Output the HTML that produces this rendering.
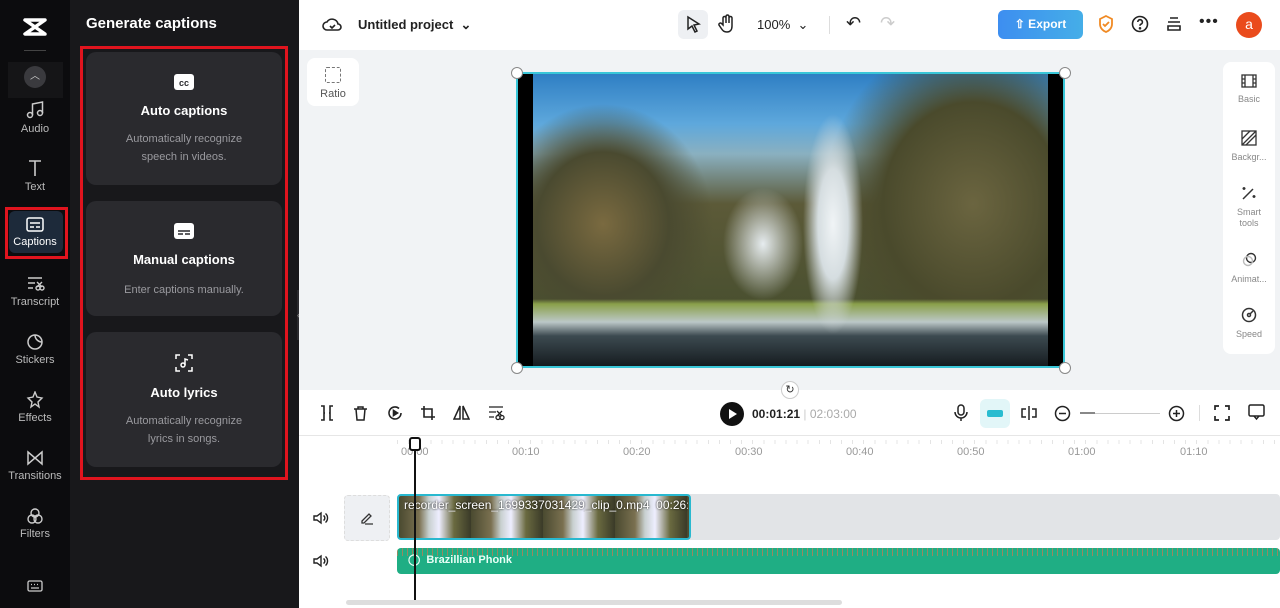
<!DOCTYPE html>
<html><head><meta charset="utf-8"><style>
*{box-sizing:border-box;margin:0;padding:0}
body{width:1280px;height:608px;overflow:hidden;font-family:"Liberation Sans",Arial,sans-serif;position:relative;background:#fff}
.a{position:absolute}
.sb{left:0;top:0;width:70px;height:608px;background:#0c0c0e}
.si{position:absolute;left:0;width:70px;text-align:center;color:#bbb;font-size:11px}
.si svg{display:block;margin:0 auto 3px}
.pn{left:70px;top:0;width:229px;height:608px;background:#18181b}
.card{position:absolute;left:86px;width:196px;background:#2a2a2e;border-radius:10px;text-align:center;color:#fff}
.card b{display:block;font-size:13px;margin-top:8px}
.card p{font-size:11px;color:#9a9a9f;line-height:18px;margin-top:12px}
.rt{position:absolute;left:0;width:52px;text-align:center;font-size:9px;color:#888;line-height:11px}
.rt svg{display:block;margin:0 auto 6px}
.tl{color:#999;font-size:11px;top:446px}
</style></head><body>
<div class="a sb"></div>
<svg class="a" style="left:22px;top:17px" width="26" height="20" viewBox="0 0 26 20"><path d="M3 3h20L3 17h20z" fill="none" stroke="#fff" stroke-width="3.5" stroke-linejoin="round"/></svg>
<div class="a" style="left:24px;top:50px;width:22px;height:1px;background:#444"></div>
<div class="a" style="left:8px;top:62px;width:55px;height:36px;background:#151517"></div>
<div class="a" style="left:24px;top:66px;width:22px;height:22px;border-radius:50%;background:#3a3a3e;color:#ccc;font-size:10px;text-align:center;line-height:22px">︿</div>
<div class="si" style="top:100px"><svg width="20" height="20" viewBox="0 0 20 20" fill="none" stroke="#ccc" stroke-width="1.5"><circle cx="5" cy="15" r="2.5"/><circle cx="15" cy="13" r="2.5"/><path d="M7.5 15V4l10-2v11"/></svg>Audio</div>
<div class="si" style="top:158px"><svg width="20" height="20" viewBox="0 0 20 20" fill="none" stroke="#ccc" stroke-width="1.6"><path d="M4 3h12M10 3v15"/></svg>Text</div>
<div class="a" style="left:9px;top:211px;width:54px;height:42px;background:#1d2a3a;border-radius:6px"></div>
<div class="a" style="left:5px;top:207px;width:63px;height:52px;border:3px solid #e0141e"></div>
<div class="si" style="top:217px;color:#fff"><svg width="18" height="16" viewBox="0 0 18 16" fill="none" stroke="#fff" stroke-width="1.5"><rect x="1" y="1" width="16" height="13" rx="2"/><path d="M4 6h10M4 10h4M10 10h4"/></svg>Captions</div>
<div class="si" style="top:275px"><svg width="20" height="18" viewBox="0 0 20 18" fill="none" stroke="#ccc" stroke-width="1.4"><path d="M3 3h14M3 8h7M3 13h5"/><circle cx="13" cy="13" r="2"/><circle cx="17" cy="13" r="2"/><path d="M12 7l5 5M17 7l-5 5"/></svg>Transcript</div>
<div class="si" style="top:333px"><svg width="18" height="18" viewBox="0 0 18 18" fill="none" stroke="#ccc" stroke-width="1.5"><circle cx="9" cy="9" r="7"/><path d="M9 2a7 7 0 0 0 7 7"/></svg>Stickers</div>
<div class="si" style="top:391px"><svg width="18" height="18" viewBox="0 0 18 18" fill="none" stroke="#ccc" stroke-width="1.4"><path d="M9 1l2 5 5 1-4 4 1 5-4-3-4 3 1-5-4-4 5-1z"/></svg>Effects</div>
<div class="si" style="top:449px"><svg width="18" height="18" viewBox="0 0 18 18" fill="none" stroke="#ccc" stroke-width="1.5"><path d="M2 3l7 6-7 6zM16 3l-7 6 7 6z"/></svg>Transitions</div>
<div class="si" style="top:507px"><svg width="18" height="18" viewBox="0 0 18 18" fill="none" stroke="#ccc" stroke-width="1.4"><circle cx="9" cy="6" r="4"/><circle cx="6" cy="12" r="4"/><circle cx="12" cy="12" r="4"/></svg>Filters</div>
<svg class="a" style="left:27px;top:580px" width="16" height="12" viewBox="0 0 16 12" fill="none" stroke="#ccc" stroke-width="1.3"><rect x="1" y="1" width="14" height="10" rx="1.5"/><path d="M4 8h8M4 4.5h1M7 4.5h1M10 4.5h1"/></svg>

<div class="a pn"></div>
<div class="a" style="left:86px;top:15px;color:#fff;font-weight:bold;font-size:15px">Generate captions</div>
<div class="a" style="left:80px;top:46px;width:208px;height:434px;border:3px solid #e0141e"></div>
<div class="card" style="top:52px;height:133px;padding-top:22px"><svg width="20" height="16" viewBox="0 0 20 16"><rect width="20" height="16" rx="3" fill="#fff"/><text x="10" y="12" font-size="9" font-weight="bold" text-anchor="middle" fill="#2a2a2e" font-family="Liberation Sans">cc</text></svg><b>Auto captions</b><p>Automatically recognize<br>speech in videos.</p></div>
<div class="card" style="top:201px;height:115px;padding-top:22px"><svg width="20" height="16" viewBox="0 0 20 16"><rect width="20" height="16" rx="3" fill="#fff"/><path d="M4 8h12M4 11h5M11 11h5" stroke="#2a2a2e" stroke-width="1.5"/></svg><b>Manual captions</b><p style="margin-top:14px">Enter captions manually.</p></div>
<div class="card" style="top:332px;height:135px;padding-top:22px"><svg width="18" height="18" viewBox="0 0 18 18" fill="none" stroke="#fff" stroke-width="1.5"><path d="M1 5V1h4M13 1h4v4M17 13v4h-4M5 17H1v-4"/><circle cx="8" cy="11" r="2"/><path d="M10 11V5l3 1"/></svg><b>Auto lyrics</b><p>Automatically recognize<br>lyrics in songs.</p></div>
<div class="a" style="left:297px;top:290px;width:9px;height:50px;background:#2a2a2e;border-radius:0 5px 5px 0;color:#999;font-size:9px;line-height:50px">‹</div>

<!-- top bar -->
<div class="a" style="left:299px;top:0;width:981px;height:50px;background:#fff"></div>
<svg class="a" style="left:322px;top:15px" width="20" height="18" viewBox="0 0 20 18" fill="none" stroke="#222" stroke-width="1.6"><path d="M5 15a4 4 0 0 1 0-8 6 6 0 0 1 11 2 3 3 0 0 1 0 6z"/><path d="M8 11l2 2 3-3"/></svg>
<div class="a" style="left:358px;top:17px;font-size:13px;font-weight:bold;color:#222">Untitled project &nbsp;⌄</div>
<div class="a" style="left:678px;top:10px;width:30px;height:29px;background:#eef0f3;border-radius:6px"></div>
<svg class="a" style="left:686px;top:15px" width="16" height="18" viewBox="0 0 16 18"><path d="M2 2l11 7-5 1 3 6-2 1-3-6-4 3z" fill="none" stroke="#222" stroke-width="1.5"/></svg>
<svg class="a" style="left:718px;top:14px" width="18" height="20" viewBox="0 0 18 20" fill="none" stroke="#222" stroke-width="1.5"><path d="M5 11V4a1.5 1.5 0 0 1 3 0v5V2.5a1.5 1.5 0 0 1 3 0V9V4a1.5 1.5 0 0 1 3 0v8c0 4-2 6-5 6s-4-1-6-4l-2-3a1.5 1.5 0 0 1 2.5-1.5z"/></svg>
<div class="a" style="left:757px;top:17px;font-size:13px;color:#222">100% &nbsp;⌄</div>
<div class="a" style="left:829px;top:16px;width:1px;height:18px;background:#ddd"></div>
<div class="a" style="left:846px;top:13px;font-size:18px;color:#222">↶</div>
<div class="a" style="left:880px;top:13px;font-size:18px;color:#ccc">↷</div>
<div class="a" style="left:998px;top:10px;width:85px;height:29px;border-radius:6px;background:linear-gradient(90deg,#3d8ef0,#45aee8);color:#fff;font-size:12px;font-weight:bold;line-height:29px;text-align:center">⇧ Export</div>
<svg class="a" style="left:1098px;top:15px" width="16" height="18" viewBox="0 0 16 18" fill="none" stroke="#f08a24" stroke-width="1.8"><path d="M8 1l6 3v5c0 4-3 7-6 8-3-1-6-4-6-8V4z"/><path d="M5 9l2 2 4-4"/></svg>
<svg class="a" style="left:1131px;top:15px" width="18" height="18" viewBox="0 0 18 18" fill="none" stroke="#222" stroke-width="1.6"><circle cx="9" cy="9" r="7.5"/><path d="M6.8 7a2.3 2.3 0 1 1 3 2.2c-.7.3-.8.8-.8 1.6"/><circle cx="9" cy="13.3" r=".5" fill="#222"/></svg>
<svg class="a" style="left:1166px;top:16px" width="16" height="16" viewBox="0 0 16 16" fill="none" stroke="#222" stroke-width="1.6"><path d="M4 2h8M2 6h12M2 10h12v4H2z"/></svg>
<div class="a" style="left:1199px;top:13px;font-size:16px;color:#222;letter-spacing:1px">•••</div>
<div class="a" style="left:1236px;top:12px;width:26px;height:26px;border-radius:50%;background:#ea4b1c;color:#fff;text-align:center;line-height:25px;font-size:14px">a</div>

<!-- canvas -->
<div class="a" style="left:299px;top:50px;width:981px;height:340px;background:#f1f3f5"></div>
<div class="a" style="left:307px;top:58px;width:52px;height:48px;background:#fff;border-radius:8px;text-align:center;font-size:11px;color:#555;padding-top:9px"><div style="width:16px;height:16px;border:1.5px dashed #777;margin:0 auto 5px;border-radius:2px"></div>Ratio</div>
<div class="a" style="left:516px;top:72px;width:549px;height:296px;border:2px solid #39c6d8;background:#000"></div>
<div class="a" style="left:533px;top:74px;width:515px;height:292px;background:
radial-gradient(ellipse 30px 110px at 300px 150px,#f0f4f6 0%,#d5dde0 50%,transparent 100%),
radial-gradient(ellipse 50px 70px at 230px 170px,#e6ecef 0%,transparent 80%),
linear-gradient(180deg,transparent 0,transparent 225px,#8aa04a 230px,#bcc8c8 248px,#3c4a50 262px,#161c20 292px),
radial-gradient(ellipse 150px 170px at 440px 130px,#6b6540 0%,#4a4a2c 60%,transparent 100%),
radial-gradient(ellipse 110px 120px at 70px 150px,#7a6a40 0%,#4a4a30 60%,transparent 100%),
linear-gradient(180deg,#2f7fc4 0,#5ea8dc 50px,#8ab0c0 80px,#5c5a38 130px,#4a5030 230px)"></div>
<div class="a" style="left:511px;top:67px;width:12px;height:12px;border-radius:50%;background:#fff;border:1px solid #888"></div>
<div class="a" style="left:1059px;top:67px;width:12px;height:12px;border-radius:50%;background:#fff;border:1px solid #888"></div>
<div class="a" style="left:511px;top:362px;width:12px;height:12px;border-radius:50%;background:#fff;border:1px solid #888"></div>
<div class="a" style="left:1059px;top:362px;width:12px;height:12px;border-radius:50%;background:#fff;border:1px solid #888"></div>
<div class="a" style="left:1223px;top:62px;width:52px;height:292px;background:#fff;border-radius:8px">
<div class="rt" style="top:12px"><svg width="16" height="14" viewBox="0 0 16 14" fill="none" stroke="#333" stroke-width="1.3"><rect x="1" y="1" width="14" height="12"/><path d="M4 1v12M12 1v12M1 5h3M1 9h3M12 5h3M12 9h3"/></svg>Basic</div>
<div class="rt" style="top:68px"><svg width="16" height="16" viewBox="0 0 16 16" fill="none" stroke="#333" stroke-width="1.3"><rect x="1" y="1" width="14" height="14"/><path d="M1 9l8-8M5 15L15 5M1 15L15 1"/></svg>Backgr...</div>
<div class="rt" style="top:123px"><svg width="16" height="16" viewBox="0 0 16 16" fill="none" stroke="#333" stroke-width="1.5"><path d="M2 14L12 4M3 2v3M1.5 3.5h3M13 10v3M11.5 11.5h3"/></svg>Smart<br>tools</div>
<div class="rt" style="top:190px"><svg width="16" height="16" viewBox="0 0 16 16" fill="none" stroke="#333" stroke-width="1.4"><circle cx="10" cy="6" r="4.5"/><circle cx="7" cy="9" r="4.5" stroke="#bbb"/></svg>Animat...</div>
<div class="rt" style="top:245px"><svg width="16" height="16" viewBox="0 0 16 16" fill="none" stroke="#333" stroke-width="1.5"><circle cx="8" cy="8" r="6.5"/><circle cx="8" cy="8" r="1.5"/><path d="M9 7l3-3"/></svg>Speed</div>
</div>
<div class="a" style="left:781px;top:381px;width:18px;height:18px;border-radius:50%;background:#fff;border:1px solid #ccc;font-size:11px;text-align:center;line-height:16px;color:#333">↻</div>

<!-- timeline toolbar -->
<div class="a" style="left:299px;top:435px;width:981px;height:1px;background:#e6e6e6"></div>
<svg class="a" style="left:319px;top:405px" width="16" height="16" viewBox="0 0 16 16" fill="none" stroke="#222" stroke-width="1.6"><path d="M2 1h3v14H2M14 1h-3v14h3M5 8h1M10 8h1"/></svg>
<svg class="a" style="left:353px;top:405px" width="15" height="16" viewBox="0 0 15 16" fill="none" stroke="#222" stroke-width="1.5"><path d="M1 4h13M5 4V2h5v2M3 4l1 11h7l1-11"/></svg>
<svg class="a" style="left:387px;top:405px" width="16" height="16" viewBox="0 0 16 16" fill="none" stroke="#222" stroke-width="1.6"><path d="M14 8a6 6 0 1 1-2-4.5"/><path d="M6.5 5.5v5l4-2.5z" fill="#222"/></svg>
<svg class="a" style="left:420px;top:405px" width="16" height="16" viewBox="0 0 16 16" fill="none" stroke="#222" stroke-width="1.6"><path d="M4 1v11h11M1 4h11v11"/></svg>
<svg class="a" style="left:453px;top:405px" width="17" height="15" viewBox="0 0 17 15" fill="none" stroke="#222" stroke-width="1.5"><path d="M7 1L1 14h6zM10 1l6 13h-6z"/></svg>
<svg class="a" style="left:487px;top:405px" width="18" height="16" viewBox="0 0 18 16" fill="none" stroke="#222" stroke-width="1.3"><path d="M2 2h14M2 7h7M2 12h5"/><circle cx="11" cy="12.5" r="2"/><circle cx="15" cy="12.5" r="2"/><path d="M10 6l5 5M15 6l-5 5"/></svg>
<div class="a" style="left:720px;top:402px;width:24px;height:24px;border-radius:50%;background:#111"></div>
<div class="a" style="left:729px;top:409px;width:0;height:0;border-left:8px solid #fff;border-top:5px solid transparent;border-bottom:5px solid transparent"></div>
<div class="a" style="left:752px;top:407px;font-size:12px;font-weight:bold;color:#222">00:01:21 <span style="color:#ccc;font-weight:normal">|</span> <span style="color:#aaa;font-weight:normal">02:03:00</span></div>
<svg class="a" style="left:954px;top:404px" width="14" height="18" viewBox="0 0 14 18" fill="none" stroke="#222" stroke-width="1.5"><rect x="4" y="1" width="6" height="10" rx="3"/><path d="M1 8a6 6 0 0 0 12 0M7 14v3"/></svg>
<div class="a" style="left:980px;top:399px;width:30px;height:29px;background:#e2f6f8;border-radius:6px"></div>
<div class="a" style="left:987px;top:410px;width:16px;height:7px;background:#29bcd0;border-radius:2px"></div>
<svg class="a" style="left:1020px;top:405px" width="18" height="16" viewBox="0 0 18 16" fill="none" stroke="#222" stroke-width="1.5"><path d="M9 1v14M6 4H2v8h4M12 4h4v8h-4"/></svg>
<svg class="a" style="left:1054px;top:405px" width="17" height="17" viewBox="0 0 17 17" fill="none" stroke="#222" stroke-width="1.5"><circle cx="8.5" cy="8.5" r="7"/><path d="M5 8.5h7"/></svg>
<div class="a" style="left:1080px;top:413px;width:80px;height:1px;background:#ccc"></div>
<div class="a" style="left:1080px;top:412px;width:15px;height:2px;background:#888"></div>
<svg class="a" style="left:1168px;top:405px" width="17" height="17" viewBox="0 0 17 17" fill="none" stroke="#222" stroke-width="1.5"><circle cx="8.5" cy="8.5" r="7"/><path d="M5 8.5h7M8.5 5v7"/></svg>
<div class="a" style="left:1199px;top:405px;width:1px;height:16px;background:#ddd"></div>
<svg class="a" style="left:1214px;top:405px" width="16" height="16" viewBox="0 0 16 16" fill="none" stroke="#222" stroke-width="1.7"><path d="M1 5V1h4M11 1h4v4M15 11v4h-4M5 15H1v-4"/></svg>
<svg class="a" style="left:1248px;top:404px" width="17" height="17" viewBox="0 0 17 17" fill="none" stroke="#222" stroke-width="1.5"><rect x="1" y="1" width="15" height="11" rx="1.5"/><path d="M6 12l2.5 3 2.5-3"/></svg>

<!-- ruler -->
<div class="a" style="left:397px;top:440px;width:883px;height:4px;background:repeating-linear-gradient(90deg,#e4e4e4 0,#e4e4e4 1px,transparent 1px,transparent 11.1px)"></div>
<div class="a tl" style="left:401px">00:00</div>
<div class="a tl" style="left:512px">00:10</div>
<div class="a tl" style="left:623px">00:20</div>
<div class="a tl" style="left:735px">00:30</div>
<div class="a tl" style="left:846px">00:40</div>
<div class="a tl" style="left:957px">00:50</div>
<div class="a tl" style="left:1068px">01:00</div>
<div class="a tl" style="left:1180px">01:10</div>

<!-- tracks -->
<svg class="a" style="left:313px;top:511px" width="16" height="14" viewBox="0 0 16 14" fill="none" stroke="#222" stroke-width="1.4"><path d="M1 5h3l4-3v10l-4-3H1z"/><path d="M10.5 4.5a3 3 0 0 1 0 5M12.5 2.5a6 6 0 0 1 0 9"/></svg>
<svg class="a" style="left:313px;top:554px" width="16" height="14" viewBox="0 0 16 14" fill="none" stroke="#222" stroke-width="1.4"><path d="M1 5h3l4-3v10l-4-3H1z"/><path d="M10.5 4.5a3 3 0 0 1 0 5M12.5 2.5a6 6 0 0 1 0 9"/></svg>
<div class="a" style="left:344px;top:495px;width:46px;height:46px;background:#eef0f3;border:1px dashed #ddd;border-radius:4px"></div>
<svg class="a" style="left:360px;top:511px" width="14" height="14" viewBox="0 0 14 14" fill="none" stroke="#333" stroke-width="1.3"><path d="M2 10l7-7 2 2-7 7H2zM5 13h8"/></svg>
<div class="a" style="left:397px;top:494px;width:883px;height:46px;background:#e2e4e7;border-radius:4px"></div>
<div class="a" style="left:397px;top:494px;width:294px;height:46px;border:2px solid #29b8cf;border-radius:4px;background:repeating-linear-gradient(90deg,#4a4a30 0,#7a7050 20px,#c8d0d0 30px,#eef 40px,#6a6a40 55px,#3a3a28 72px)"></div>
<div class="a" style="left:404px;top:498px;font-size:12px;color:#fff;text-shadow:0 0 2px #000;white-space:nowrap;width:284px;overflow:hidden">recorder_screen_1699337031429_clip_0.mp4 &nbsp;00:26:1</div>
<div class="a" style="left:397px;top:548px;width:883px;height:26px;background:#1fae84;border-radius:4px;overflow:hidden"><div style="height:8px;background:repeating-linear-gradient(90deg,#e0744a 0,#e0744a 1px,transparent 1px,transparent 5px);opacity:.6"></div></div>
<div class="a" style="left:408px;top:553px;font-size:11px;font-weight:bold;color:#e8fff6">◯ &nbsp;Brazillian Phonk</div>
<div class="a" style="left:414px;top:448px;width:2px;height:152px;background:#111"></div>
<div class="a" style="left:409px;top:437px;width:12px;height:14px;border:2px solid #111;border-radius:3px;background:#fff"></div>
<div class="a" style="left:346px;top:600px;width:496px;height:5px;background:#ddd;border-radius:3px"></div>
</body></html>
